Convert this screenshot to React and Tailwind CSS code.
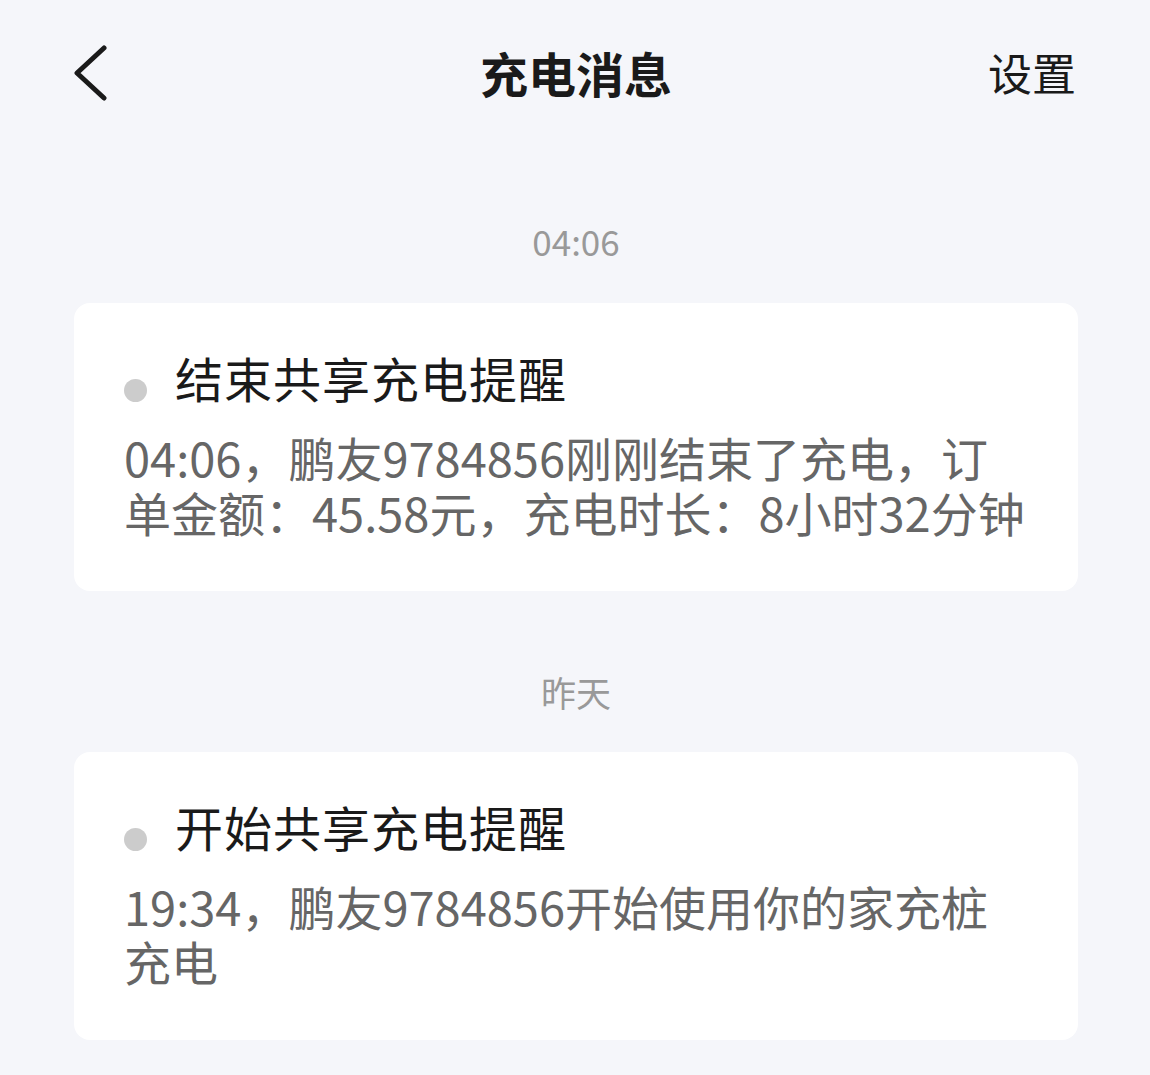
import React from 'react';

const messages = [
    {
        time: '04:06',
        title: '结束共享充电提醒',
        body: '04:06，鹏友9784856刚刚结束了充电，订单金额：45.58元，充电时长：8小时32分钟',
    },
    {
        time: '昨天',
        title: '开始共享充电提醒',
        body: '19:34，鹏友9784856开始使用你的家充桩充电',
    },
];

const App = () => {
    return (
        <div
            className="min-h-screen bg-[#f5f6fa] pl-[74px] pr-[72px]"
            style={{ fontFamily: '"Noto Sans CJK SC", "Noto Sans", sans-serif' }}
        >
            {/* Header */}
            <div className="relative flex h-[150px] items-center justify-between">
                <button className="-ml-[2px] flex h-[60px] w-[40px] items-center">
                    <svg width="40" height="60" viewBox="0 0 40 60" fill="none">
                        <path d="M32 3 L5 28 L32 53" stroke="#1a1a1a" strokeWidth="5" strokeLinecap="round" strokeLinejoin="round" />
                    </svg>
                </button>
                <h1 className="absolute left-1/2 -translate-x-1/2 -translate-y-[3px] text-[48px] font-bold leading-none text-[#1a1a1a]">充电消息</h1>
                <span className="mr-[2px] -translate-y-[3px] text-[44px] leading-none text-[#1a1a1a]">设置</span>
            </div>

            {messages.map((m, i) => (
                <div key={i}>
                    <div className={`${i === 0 ? 'mt-[66px]' : 'mt-[76px]'} text-center text-[35px] leading-[50px] text-[#999999]`}>
                        {m.time}
                    </div>
                    <div className={`${i === 0 ? 'mt-[37px]' : 'mt-[35px]'} rounded-[16px] bg-white pt-[44px] pb-[52px] pl-[50px] pr-[52px]`}>
                        <div className="flex h-[60px] items-center">
                            <span className="mt-[26px] h-[23px] w-[23px] shrink-0 rounded-full bg-[#cccccc]"></span>
                            <span className="ml-[28px] text-[48px] leading-[60px] tracking-[1px] text-[#1a1a1a]">{m.title}</span>
                        </div>
                        <p className="mt-[22px] text-[47px] leading-[55px] text-[#666666]">{m.body}</p>
                    </div>
                </div>
            ))}
        </div>
    );
};

export default App;
